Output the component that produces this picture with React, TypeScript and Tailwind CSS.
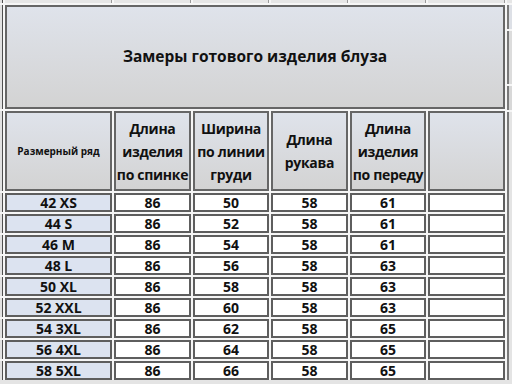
import React from 'react';

const rows = [
  ['42 XS', '86', '50', '58', '61'],
  ['44 S', '86', '52', '58', '61'],
  ['46 M', '86', '54', '58', '61'],
  ['48 L', '86', '56', '58', '63'],
  ['50 XL', '86', '58', '58', '63'],
  ['52 XXL', '86', '60', '58', '63'],
  ['54 3XL', '86', '62', '58', '65'],
  ['56 4XL', '86', '64', '58', '65'],
  ['58 5XL', '86', '66', '58', '65'],
];

const headers = [
  ['Длина', 'изделия', 'по спинке'],
  ['Ширина', 'по линии', 'груди'],
  ['Длина', 'рукава'],
  ['Длина', 'изделия', 'по переду'],
];

const edge = 'bg-[#e2e2e2] border-r border-[#4f4f4f]';
const head = 'bg-gradient-to-b from-[#dfe3eb] to-[#d3d3d3] border-2 border-[#666666]';

export default function App() {
  return (
    <div className="w-[512px] h-[384px] overflow-hidden bg-[#e4e4e4] font-['Open_Sans',sans-serif] text-[#111111]">
      <div className="grid grid-cols-[3px_107px_77px_76px_77px_76px_77px_1fr] grid-rows-[3px_104px_80px_repeat(9,19px)] gap-[2px] bg-[#f6f6f6]">
        {/* верхняя полоса */}
        <div className={edge} />
        <div className="bg-[#e6e6e6] border-r border-[#9a9a9a]" />
        <div className="bg-[#e6e6e6] border-r border-[#9a9a9a]" />
        <div className="bg-[#e6e6e6] border-r border-[#9a9a9a]" />
        <div className="bg-[#e6e6e6] border-r border-[#9a9a9a]" />
        <div className="bg-[#e6e6e6] border-r border-[#9a9a9a]" />
        <div className="bg-[#e6e6e6] border-r border-[#9a9a9a]" />
        <div className="row-span-12 flex flex-col gap-[2px] bg-[#f6f6f6]">
          <div className="h-[3px] bg-[#e6e6e6]" />
          <div className="h-[24px] bg-[#dde0e6] border-l-2 border-[#7a7a7a]" />
          <div className="h-[53px] bg-[#dcdcdc] border-l-2 border-[#7a7a7a]" />
          <div className="h-[24px] bg-[#d8d8d8] border-l-2 border-[#7a7a7a]" />
          <div className="flex-1 bg-[#e4e4e4] border-l-2 border-[#7a7a7a]" />
        </div>

        {/* заголовок */}
        <div className={edge} />
        <div className={`col-span-6 ${head} flex items-center justify-center`}>
          <span className="text-[15.5px] font-bold">Замеры готового изделия блуза</span>
        </div>

        {/* шапка */}
        <div className={edge} />
        <div className={`${head} flex items-center justify-center`}>
          <span className="text-[10px] font-bold">Размерный ряд</span>
        </div>
        {headers.map((h, i) => (
          <div key={i} className={`${head} flex flex-col items-center justify-center`}>
            {h.map((line, j) => (
              <span key={j} className="text-[14px] font-bold leading-[23px] whitespace-nowrap tracking-[-0.3px]">
                {line}
              </span>
            ))}
          </div>
        ))}
        <div className={head} />

        {/* данные */}
        {rows.map((r, i) => (
          <React.Fragment key={i}>
            <div className={edge} />
            <div className="bg-[#dce3f0] border-2 border-[#5e5e5e] flex items-center justify-center text-[14px] font-bold leading-none">
              {r[0]}
            </div>
            {r.slice(1).map((v, j) => (
              <div key={j} className="bg-white border-2 border-[#5e5e5e] flex items-center justify-center text-[14px] font-bold leading-none">
                {v}
              </div>
            ))}
            <div className="bg-white border-2 border-[#5e5e5e]" />
          </React.Fragment>
        ))}
      </div>
    </div>
  );
}
